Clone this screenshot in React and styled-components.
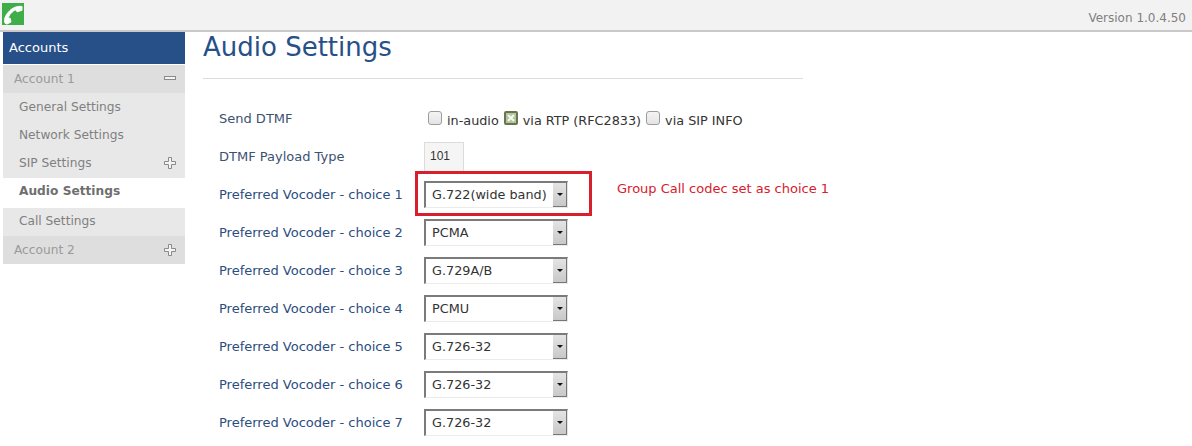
import React from 'react';
import styled, { createGlobalStyle } from 'styled-components';

const Global = createGlobalStyle`
  html, body {
    margin: 0;
    padding: 0;
    background: #fff;
    font-family: "DejaVu Sans", sans-serif;
    overflow: hidden;
  }
`;

const Page = styled.div`
  width: 1192px;
  height: 446px;
  overflow: hidden;
`;

const TopBar = styled.header`
  display: flex;
  justify-content: space-between;
  height: 27px;
  padding: 3px 6px 0 2px;
  background: #f2f2f2;
  border-bottom: 2px solid #c9c9c9;
`;

const Version = styled.span`
  margin-top: 8px;
  font-size: 12px;
  color: #808080;
`;

const Body = styled.div`
  display: flex;
`;

const Sidebar = styled.nav`
  width: 182px;
  margin-left: 3px;
  flex: none;
`;

const SideTitle = styled.div`
  height: 32px;
  margin-bottom: 1px;
  padding-left: 6px;
  line-height: 31px;
  font-size: 13px;
  color: #fff;
  background: #275089;
`;

const Group = styled.div`
  display: flex;
  justify-content: space-between;
  align-items: center;
  height: 28px;
  padding: 0 9px ${(p) => (p.$closed ? '0' : '1px')} 11px;
  box-sizing: border-box;
  font-size: 12.2px;
  color: #9a9a9a;
  background: #dedede;
`;

const Item = styled.div`
  display: flex;
  justify-content: space-between;
  align-items: center;
  height: ${(p) => (p.$active ? '30px' : p.$short ? '28px' : '28.33px')};
  padding: 0 9px ${(p) => (p.$active ? '4px' : p.$short ? '2px' : '1px')} 16px;
  box-sizing: border-box;
  font-size: 12.2px;
  font-weight: ${(p) => (p.$active ? 700 : 400)};
  color: ${(p) => (p.$active ? '#6f6f6f' : '#808080')};
  background: ${(p) => (p.$active ? '#fff' : '#e8e8e8')};
`;

const Main = styled.main`
  margin-left: 18px;
  width: 600px;
`;

const Title = styled.h1`
  margin: 0;
  height: 46px;
  border-bottom: 1px solid #dcdcdc;
  font-size: 26px;
  font-weight: 400;
  line-height: 30px;
  color: #275089;
`;

const Form = styled.div`
  margin-top: 20px;
  padding-left: 16px;
`;

const Row = styled.div`
  display: flex;
  align-items: center;
  height: 38px;
`;

const Label = styled.label`
  width: 205px;
  flex: none;
  font-size: 13px;
  color: ${(p) => (p.$dark ? '#3c5273' : '#2b4d80')};
`;

const Options = styled.div`
  display: flex;
  align-items: center;
  margin: 5px 0 0 -1px;
  white-space: nowrap;
  font-size: 12.8px;
  color: #333;
`;

const CheckBox = styled.span`
  display: inline-flex;
  align-items: center;
  justify-content: center;
  width: 14px;
  height: 14px;
  margin: -5px 5px 0 5px;
  box-sizing: border-box;
  border: 1px solid #9c9c9c;
  border-radius: 3px;
  background: linear-gradient(#f4f4f4, #e4e4e4);
`;

const CheckedBox = styled(CheckBox)`
  border: 2px solid #66774f;
  border-radius: 2px;
  background: #b4c49e;
`;

const NumberInput = styled.div`
  width: 33px;
  height: 29px;
  margin-top: 2px;
  padding-left: 5px;
  line-height: 27px;
  font-family: "Liberation Sans", sans-serif;
  font-size: 12px;
  color: #333;
  background: #f5f5f5;
  border-top: 1px solid #dcdcdc;
  border-left: 1px solid #dcdcdc;
  border-right: 1px solid #dcdcdc;
`;

const Field = styled.div`
  position: relative;
  display: flex;
  flex: none;
  align-items: center;
  justify-content: space-between;
  width: 144px;
  height: 27px;
  margin-top: 1px;
  padding: 0 0 1px 6px;
  box-sizing: border-box;
  white-space: nowrap;
  font-size: 12.8px;
  color: #333;
  background: #fff;
  border-top: 2px solid #7b7b7b;
  border-left: 2px solid #7b7b7b;
  border-right: 1px solid #e4e4e4;
  border-bottom: 1px solid #ececec;
`;

const Arrow = styled.span`
  display: flex;
  align-items: center;
  justify-content: center;
  width: 14px;
  height: 24px;
  margin-bottom: -1px;
  background: linear-gradient(#e4e4e4, #c8c8c8);
  border-right: 1px solid #777;
  border-bottom: 1px solid #777;
  box-sizing: border-box;
  &::after {
    content: '';
    border-left: 3px solid transparent;
    border-right: 3px solid transparent;
    border-top: 3px solid #111;
  }
`;

const Highlight = styled.div`
  position: absolute;
  left: -11px;
  top: -12px;
  width: 177px;
  height: 45px;
  box-sizing: border-box;
  border: 3px solid #d7202c;
`;

const Note = styled.span`
  flex: none;
  margin-left: 49px;
  margin-top: -12px;
  white-space: nowrap;
  font-size: 13px;
  color: #d7202c;
`;

const PhoneLogo = () => (
  <svg width="22" height="22" viewBox="0 0 22 22">
    <rect width="22" height="22" fill="#3fae49" />
    <path
      d="M20 3.5c-5-.8-10 1.5-13.5 5.5S2.5 15.5 2.5 18.5c0 1.5 1 2.5 2.5 2.5l4-2-1-4-2 .5c.5-2 1.5-3.5 3-5.2s3.3-3 5-3.5l1 2 5-1.5z"
      fill="#fff"
      stroke="#fff"
      strokeWidth="1"
      strokeLinejoin="round"
    />
  </svg>
);

const PlusIcon = () => (
  <svg width="12" height="12" viewBox="0 0 12 12" fill="#f4f4f4" stroke="#8a8a8a">
    <path d="M4.5.5h3v4h4v3h-4v4h-3v-4h-4v-3h4z" />
  </svg>
);

const MinusIcon = () => (
  <svg width="12" height="5" viewBox="0 0 12 5" fill="#f4f4f4" stroke="#8a8a8a">
    <rect x=".5" y=".5" width="11" height="3" />
  </svg>
);

const choices = ['G.722(wide band)', 'PCMA', 'G.729A/B', 'PCMU', 'G.726-32', 'G.726-32', 'G.726-32'];

const App = () => (
  <Page>
    <Global />
    <TopBar>
      <PhoneLogo />
      <Version>Version 1.0.4.50</Version>
    </TopBar>
    <Body>
      <Sidebar>
        <SideTitle>Accounts</SideTitle>
        <Group>Account 1<MinusIcon /></Group>
        <Item>General Settings</Item>
        <Item>Network Settings</Item>
        <Item>SIP Settings<PlusIcon /></Item>
        <Item $active>Audio Settings</Item>
        <Item $short>Call Settings</Item>
        <Group $closed>Account 2<PlusIcon /></Group>
      </Sidebar>
      <Main>
        <Title>Audio Settings</Title>
        <Form>
          <Row>
            <Label $dark>Send DTMF</Label>
            <Options>
              <CheckBox />in-audio
              <CheckedBox>
                <svg width="8" height="8" viewBox="0 0 8 8" stroke="#f4f7ee" strokeWidth="2">
                  <path d="M1 1l6 6M7 1L1 7" />
                </svg>
              </CheckedBox>via RTP (RFC2833)
              <CheckBox />via SIP INFO
            </Options>
          </Row>
          <Row>
            <Label $dark>DTMF Payload Type</Label>
            <NumberInput>101</NumberInput>
          </Row>
          {choices.map((value, i) => (
            <Row key={i}>
              <Label>Preferred Vocoder - choice {i + 1}</Label>
              <Field>
                {value}
                <Arrow />
                {i === 0 && <Highlight />}
              </Field>
              {i === 0 && <Note>Group Call codec set as choice 1</Note>}
            </Row>
          ))}
        </Form>
      </Main>
    </Body>
  </Page>
);

export default App;
